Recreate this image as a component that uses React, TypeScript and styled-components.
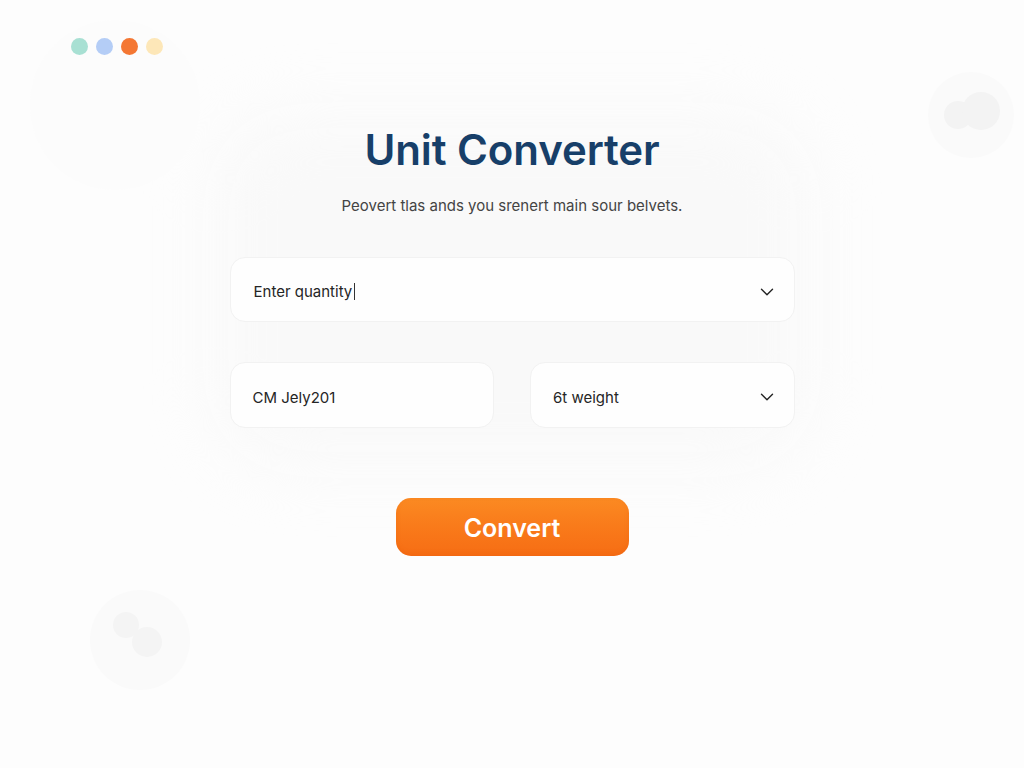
import React from "react";
import styled, { createGlobalStyle } from "styled-components";
import { ChevronDown } from "lucide-react";

const Global = createGlobalStyle`
  html, body { margin: 0; padding: 0; background: #fdfdfd; }
  body { font-family: Inter, "Noto Sans", Arial, sans-serif; }
  * { box-sizing: border-box; }
`;

const Page = styled.div`
  position: relative;
  width: 1024px;
  height: 768px;
  overflow: hidden;
  background: #fdfdfd;
  padding: 38px 0 0 0;
`;

const Header = styled.div`
  display: flex;
  gap: 8px;
  padding-left: 71px;
  position: relative;
  z-index: 1;
`;

const Dot = styled.span<{ $c: string }>`
  width: 17px;
  height: 17px;
  border-radius: 50%;
  background: ${(p) => p.$c};
`;

const Main = styled.main`
  width: 565px;
  margin: 70px auto 0;
  display: flex;
  flex-direction: column;
  align-items: center;
  position: relative;
  z-index: 1;
`;

const Title = styled.h1`
  margin: 0;
  font-size: 42px;
  line-height: 50px;
  font-weight: 600;
  color: #173f69;
  letter-spacing: -0.1px;
`;

const Subtitle = styled.p`
  margin: 19px 0 0;
  font-size: 15px;
  line-height: 24px;
  color: #444;
`;

const Field = styled.div`
  width: 100%;
  height: 65px;
  display: flex;
  align-items: center;
  justify-content: space-between;
  padding: 4px 16px 0 23px;
  background: #fefefe;
  border: 1px solid #f2f2f2;
  border-radius: 15px;
  font-size: 15px;
  color: #252525;
`;

const FirstField = styled(Field)`
  margin-top: 39px;
`;

const Row = styled.div`
  width: 100%;
  margin-top: 40px;
  display: grid;
  grid-template-columns: 1fr 1fr;
  gap: 36px;
`;

const RowField = styled(Field)`
  height: 66px;
  padding-left: 22px;
`;

const Caret = styled.span`
  display: inline-block;
  width: 1px;
  height: 17px;
  background: #333;
  margin-left: 2px;
  vertical-align: -3px;
`;

const Button = styled.button`
  margin-top: 70px;
  width: 233px;
  height: 58px;
  border: none;
  border-radius: 15px;
  background: linear-gradient(180deg, #fb8a22 0%, #f97a1a 50%, #f66d14 100%);
  box-shadow: inset 0 -2px 4px rgba(230, 90, 10, 0.25);
  color: #fff;
  font-family: inherit;
  font-size: 25px;
  font-weight: 600;
  padding-top: 2px;
  cursor: pointer;
`;

const Blob = styled.div<{ $x: number; $y: number; $s: number; $c: string }>`
  position: absolute;
  left: ${(p) => p.$x}px;
  top: ${(p) => p.$y}px;
  width: ${(p) => p.$s}px;
  height: ${(p) => p.$s}px;
  border-radius: 50%;
  background: ${(p) => p.$c};
`;

const Glow = styled.div`
  position: absolute;
  left: 215px;
  top: 115px;
  width: 595px;
  height: 350px;
  border-radius: 80px;
  background: #f9f9f9;
  filter: blur(30px);
`;

export default function App() {
  return (
    <Page>
      <Global />
      <Glow />
      <Blob $x={928} $y={72} $s={86} $c="#fafafa" />
      <Blob $x={944} $y={101} $s={28} $c="#f3f3f3" />
      <Blob $x={962} $y={92} $s={38} $c="#f3f3f3" />
      <Blob $x={30} $y={20} $s={170} $c="#fcfcfc" />
      <Blob $x={90} $y={590} $s={100} $c="#fafafa" />
      <Blob $x={132} $y={627} $s={30} $c="#f4f4f4" />
      <Blob $x={113} $y={612} $s={26} $c="#f4f4f4" />
      <Header>
        <Dot $c="#a8e0d3" />
        <Dot $c="#b4cdf6" />
        <Dot $c="#f47733" />
        <Dot $c="#fde7b8" />
      </Header>
      <Main>
        <Title>Unit Converter</Title>
        <Subtitle>Peovert tlas ands you srenert main sour belvets.</Subtitle>
        <FirstField>
          <span>
            Enter quantity<Caret />
          </span>
          <ChevronDown size={22} strokeWidth={1.5} color="#222" />
        </FirstField>
        <Row>
          <RowField>
            <span>CM Jely201</span>
          </RowField>
          <RowField>
            <span>6t weight</span>
            <ChevronDown size={22} strokeWidth={1.5} color="#222" />
          </RowField>
        </Row>
        <Button>Convert</Button>
      </Main>
    </Page>
  );
}
